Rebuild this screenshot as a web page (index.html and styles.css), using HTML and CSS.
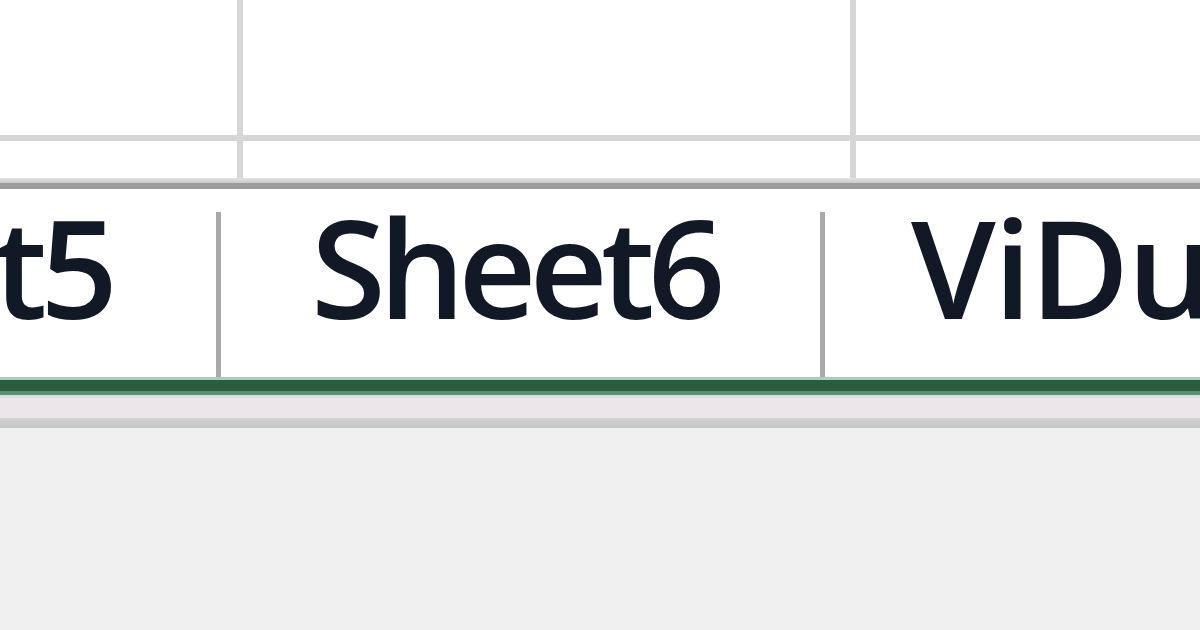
FILE: index.html
```html
<!DOCTYPE html>
<html lang="en">
<head>
    <meta charset="UTF-8">
    <meta name="viewport" content="width=device-width, initial-scale=1.0">
    <title>Sheet tabs</title>
    <link rel="stylesheet" href="styles.css">
</head>
<body>
    <div class="sheet-grid">
        <div class="cell"></div>
        <div class="cell"></div>
        <div class="cell"></div>
        <div class="cell"></div>
        <div class="cell"></div>
        <div class="cell"></div>
    </div>
    <div class="grid-edge"></div>

    <div class="tab-bar">
        <div class="tab tab-first"><span>Sheet5</span></div>
        <div class="tab tab-active"><span>Sheet6</span></div>
        <div class="tab tab-last"><span>ViDu</span></div>
    </div>
    <div class="active-line"></div>

    <div class="status-gap"></div>
    <div class="status-edge"></div>
    <div class="status-bar"></div>
</body>
</html>
```

FILE: styles.css
```css
body {
    margin: 0;
    padding: 0;
    width: 1200px;
    height: 630px;
    overflow: hidden;
    background-color: #f0efef;
    font-family: "Open Sans", "Noto Sans", sans-serif;
}

/* spreadsheet cells above the tabs */
.sheet-grid {
    display: grid;
    grid-template-columns: 237px 607px 1fr;
    grid-template-rows: 135px 37px;
    column-gap: 6px;
    row-gap: 6px;
    background-color: #d6d6d6;
}

.cell {
    background-color: #ffffff;
}

.grid-edge {
    height: 11px;
    background: linear-gradient(to bottom, #e2e2e2 0, #c9c9c9 5px, #9c9c9c 5px, #9a9a9a 11px);
}

/* sheet tabs */
.tab-bar {
    display: flex;
    height: 188px;
    background-color: #ffffff;
    overflow: hidden;
}

.tab {
    position: relative;
    display: flex;
    align-items: flex-start;
    flex-shrink: 0;
    white-space: nowrap;
    font-size: 136px;
    font-weight: 600;
    line-height: 1;
    color: #121826;
    letter-spacing: -7px;
}

.tab span {
    margin-top: 10px;
}

.tab::after {
    content: "";
    position: absolute;
    right: 0;
    top: 23px;
    bottom: 0;
    width: 5px;
    background-color: #a9a9a9;
}

.tab-first {
    width: 221px;
    justify-content: flex-end;
    padding-right: 110px;
    box-sizing: border-box;
    overflow: hidden;
}

.tab-active {
    width: 604px;
    padding-left: 90px;
    box-sizing: border-box;
}

.tab-last::after {
    display: none;
}

.tab-last {
    padding-left: 86px;
    letter-spacing: -2px;
}

.active-line {
    height: 21px;
    background: linear-gradient(to bottom,
        #a6cdbf 0, #a6cdbf 3px,
        #2b5c3e 3px, #2b5c3e 14px,
        #5e8c76 14px, #5e8c76 18px,
        #d3e2dc 18px, #d3e2dc 21px);
}

/* strip under the tabs */
.status-gap {
    height: 20px;
    background-color: #ece5e9;
}

.status-edge {
    height: 10px;
    background: linear-gradient(to bottom, #d2d2d2, #c6c6c6);
}

.status-bar {
    height: 202px;
    background-color: #f1f0f1;
}
```
